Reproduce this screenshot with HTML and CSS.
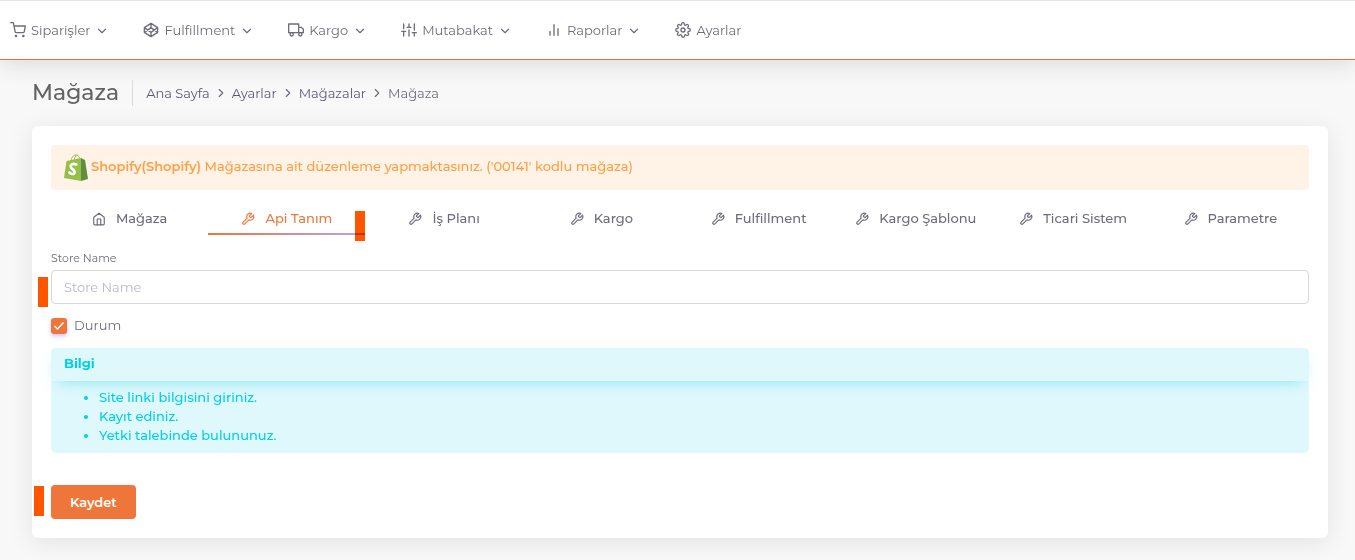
FILE: index.html
```html
<!DOCTYPE html>
<html lang="tr">
<head>
<meta charset="utf-8">
<meta name="viewport" content="width=device-width, initial-scale=1">
<title>Mağaza</title>
<link rel="stylesheet" href="styles.css">
</head>
<body>
<svg class="sprite" aria-hidden="true">
  <symbol id="chevron-down" viewBox="0 0 24 24"><path d="M6 9l6 6 6-6"/></symbol>
  <symbol id="chevron-right" viewBox="0 0 24 24"><path d="M9 18l6-6-6-6"/></symbol>
  <symbol id="tool" viewBox="0 0 24 24"><path d="M14.7 6.3a1 1 0 0 0 0 1.4l1.6 1.6a1 1 0 0 0 1.4 0l3.77-3.77a6 6 0 0 1-7.94 7.94l-6.91 6.91a2.12 2.12 0 0 1-3-3l6.91-6.91a6 6 0 0 1 7.94-7.94l-3.76 3.76z"/></symbol>
</svg>

<header class="navbar">
  <nav class="menu">
    <a class="menu-item" href="#">
      <svg class="icon" viewBox="0 0 24 24"><circle cx="9" cy="21" r="1"/><circle cx="20" cy="21" r="1"/><path d="M1 1h4l2.68 13.39a2 2 0 0 0 2 1.61h9.72a2 2 0 0 0 2-1.61L23 6H6"/></svg>
      <span>Siparişler</span>
      <svg class="caret"><use href="#chevron-down"/></svg>
    </a>
    <a class="menu-item" href="#">
      <svg class="icon" viewBox="0 0 24 24"><path d="M12 2l10 6.500v7L12 22 2 15.500v-7zM12 22v-6.500M22 8.500l-10 7-10-7M2 15.500l10-7 10 7M12 2v6.500"/></svg>
      <span>Fulfillment</span>
      <svg class="caret"><use href="#chevron-down"/></svg>
    </a>
    <a class="menu-item" href="#">
      <svg class="icon" viewBox="0 0 24 24"><path d="M1 3h15v13H1zM16 8h4l3 3v5h-7z"/><circle cx="5.500" cy="18.500" r="2.500"/><circle cx="18.500" cy="18.500" r="2.500"/></svg>
      <span>Kargo</span>
      <svg class="caret"><use href="#chevron-down"/></svg>
    </a>
    <a class="menu-item" href="#">
      <svg class="icon" viewBox="0 0 24 24"><path d="M4 21v-7M4 10V3M12 21v-9M12 8V3M20 21v-5M20 12V3M1 14h6M9 8h6M17 16h6"/></svg>
      <span>Mutabakat</span>
      <svg class="caret"><use href="#chevron-down"/></svg>
    </a>
    <a class="menu-item" href="#">
      <svg class="icon" viewBox="0 0 24 24"><path d="M18 20V10M12 20V4M6 20v-6"/></svg>
      <span>Raporlar</span>
      <svg class="caret"><use href="#chevron-down"/></svg>
    </a>
    <a class="menu-item" href="#">
      <svg class="icon" viewBox="0 0 24 24"><circle cx="12" cy="12" r="3"/><path d="M19.4 15a1.65 1.65 0 0 0 .33 1.82l.06.06a2 2 0 0 1-2.83 2.83l-.06-.06a1.65 1.65 0 0 0-2.800 1.170V21a2 2 0 0 1-4 0v-.09A1.65 1.65 0 0 0 7.200 19.650l-.06.06a2 2 0 0 1-2.830-2.830l.06-.06A1.65 1.65 0 0 0 3.090 14H3a2 2 0 0 1 0-4h.09A1.65 1.65 0 0 0 4.370 7.180l-.06-.06a2 2 0 0 1 2.830-2.830l.06.06A1.65 1.65 0 0 0 10 3.090V3a2 2 0 0 1 4 0v.09a1.65 1.65 0 0 0 2.820 1.260l.06-.06a2 2 0 0 1 2.830 2.830l-.06.06A1.65 1.65 0 0 0 20.910 10H21a2 2 0 0 1 0 4h-.09a1.65 1.65 0 0 0-1.510 1z"/></svg>
      <span>Ayarlar</span>
    </a>
  </nav>
</header>

<main class="content">
  <div class="page-head">
    <h1 class="page-title">Mağaza</h1>
    <nav class="breadcrumb" aria-label="breadcrumb">
      <a href="#">Ana Sayfa</a>
      <svg class="crumb-sep"><use href="#chevron-right"/></svg>
      <a href="#">Ayarlar</a>
      <svg class="crumb-sep"><use href="#chevron-right"/></svg>
      <a href="#">Mağazalar</a>
      <svg class="crumb-sep"><use href="#chevron-right"/></svg>
      <span>Mağaza</span>
    </nav>
  </div>

  <section class="card">
    <div class="notice">
      <svg class="shop-logo" viewBox="0 0 24 27">
        <path d="M7 8C7 4 9 1 12 1c2 0 4 2 4 6M10 8c0-4 1-6 4-7" fill="none" stroke="#95bf47" stroke-width="1"/>
        <path d="M2.500 7L17 4v23L0 24z" fill="#95bf47"/>
        <path d="M17 4l4 2 3 19-7 2z" fill="#5e8e3e"/>
        <path d="M12.300 10.500C8.500 8.800 5.800 11 7 13.500c1 2 3.800 2.300 3.600 4.600-.2 2.600-3.300 2.500-5.300.4" fill="none" stroke="#fff" stroke-width="2.600"/>
      </svg>
      <p class="notice-text"><strong>Shopify(Shopify)</strong> Mağazasına ait düzenleme yapmaktasınız. ('00141' kodlu mağaza)</p>
    </div>

    <nav class="tabs">
      <a class="tab" href="#"><svg class="tab-icon" viewBox="0 0 24 24"><path d="M3 9l9-7 9 7v11a2 2 0 0 1-2 2H5a2 2 0 0 1-2-2z"/><path d="M9 22V12h6v10"/></svg>Mağaza</a>
      <a class="tab active" href="#"><svg class="tab-icon"><use href="#tool"/></svg>Api Tanım<i class="marker marker-tab"></i></a>
      <a class="tab" href="#"><svg class="tab-icon"><use href="#tool"/></svg>İş Planı</a>
      <a class="tab" href="#"><svg class="tab-icon"><use href="#tool"/></svg>Kargo</a>
      <a class="tab" href="#"><svg class="tab-icon"><use href="#tool"/></svg>Fulfillment</a>
      <a class="tab" href="#"><svg class="tab-icon"><use href="#tool"/></svg>Kargo Şablonu</a>
      <a class="tab" href="#"><svg class="tab-icon"><use href="#tool"/></svg>Ticari Sistem</a>
      <a class="tab" href="#"><svg class="tab-icon"><use href="#tool"/></svg>Parametre</a>
    </nav>

    <form class="form">
      <label class="field-label" for="store-name">Store Name</label>
      <div class="field">
        <input class="text-input" id="store-name" type="text" placeholder="Store Name">
        <i class="marker marker-field"></i>
      </div>
      <div class="check">
        <input class="checkbox" id="status" type="checkbox" checked>
        <label class="check-label" for="status">Durum</label>
      </div>
      <div class="info">
        <h2 class="info-title">Bilgi</h2>
        <ul class="info-list">
          <li>Site linki bilgisini giriniz.</li>
          <li>Kayıt ediniz.</li>
          <li>Yetki talebinde bulununuz.</li>
        </ul>
      </div>
      <div class="actions">
        <button class="save" type="button">Kaydet</button>
        <i class="marker marker-save"></i>
      </div>
    </form>
  </section>
</main>
</body>
</html>
```
FILE: styles.css
```css
* { box-sizing: border-box; }

body {
  margin: 0;
  background: #f8f8f8;
  color: #6e6b7b;
  font-family: Montserrat, Inter, sans-serif;
  font-size: 13px;
  line-height: 20px;
}

a { color: inherit; text-decoration: none; }
h1, h2, p, ul { margin: 0; }

svg {
  flex: none;
  fill: none;
  stroke: currentColor;
  stroke-width: 2;
  stroke-linecap: round;
  stroke-linejoin: round;
}

.sprite { display: none; }

.navbar {
  height: 60px;
  background: #fff;
  border-top: 1px solid #e4e4e4;
  border-bottom: 1px solid #dd6f42;
  box-shadow: 0 4px 24px rgba(34, 41, 47, 0.14);
}

.menu {
  display: flex;
  align-items: center;
  gap: 34px;
  height: 100%;
  padding: 0 10px;
}

.menu-item {
  display: flex;
  align-items: center;
  gap: 5px;
}

.icon { width: 16px; height: 16px; }
.caret { width: 14px; height: 14px; margin-top: 2px; }

.content { padding: 20px 27px 22px 32px; }

.page-head {
  display: flex;
  align-items: center;
  height: 26px;
  margin-bottom: 20px;
}

.page-title {
  padding-right: 13px;
  border-right: 1px solid #d6dce1;
  color: #636363;
  font-size: 22px;
  font-weight: 500;
  line-height: 26px;
}

.breadcrumb {
  display: flex;
  align-items: center;
  gap: 4px;
  padding-left: 13px;
}

.breadcrumb a { color: #5e5873; }
.crumb-sep { width: 14px; height: 14px; }

.card {
  padding: 19px;
  background: #fff;
  border-radius: 6px;
  box-shadow: 0 4px 24px rgba(34, 41, 47, 0.1);
}

.notice {
  display: flex;
  align-items: center;
  gap: 3px;
  min-height: 45px;
  padding: 0 13px;
  border-radius: 4px;
  background: #fff2e6;
  color: #ff9f43;
  font-weight: 500;
}

.notice-text { padding-bottom: 3px; }
.notice strong { font-weight: 600; }
.shop-logo { width: 24px; height: 27px; stroke: none; }

.tabs { display: flex; margin-bottom: 15px; }

.tab {
  position: relative;
  display: flex;
  flex: 1 1 0;
  align-items: center;
  justify-content: center;
  gap: 10px;
  height: 45px;
  padding-top: 11px;
  font-weight: 500;
  white-space: nowrap;
}

.tab-icon { width: 14px; height: 14px; margin-top: 2px; }
.tab.active { color: #ee763b; }

.tab.active::after {
  content: "";
  position: absolute;
  right: 1px;
  bottom: 0;
  left: 0;
  height: 2px;
  background: linear-gradient(90deg, #ee763b, #b8a6e6);
}

.marker {
  position: absolute;
  width: 10px;
  height: 30px;
  background: #ff5500;
  mix-blend-mode: multiply;
}

.marker-tab { z-index: 1; right: 1px; bottom: -6px; }
.marker-field { left: -13px; top: 7px; }
.marker-save { left: -17px; top: 1px; }

.field-label { display: block; font-size: 11px; line-height: 16px; }
.field, .actions { position: relative; }
.field { margin-top: 4px; }

.text-input {
  display: block;
  width: 100%;
  height: 34px;
  padding: 0 12px;
  border: 1px solid #d8d6de;
  border-radius: 4px;
  background: #fff;
  color: #6e6b7b;
  font: inherit;
}

.text-input::placeholder { color: #b9b9c3; opacity: 1; }

.check {
  display: flex;
  align-items: center;
  gap: 7px;
  height: 20px;
  margin: 12px 0;
}

.check-label { padding-bottom: 2px; }

.checkbox {
  width: 16px;
  height: 16px;
  margin: 0;
  appearance: none;
  border-radius: 3px;
  background: #ee763b url("data:image/svg+xml,%3Csvg xmlns='http://www.w3.org/2000/svg' viewBox='0 0 16 16'%3E%3Cpath d='M3.500 8l3 3 6-6.500' fill='none' stroke='white' stroke-width='1.500'/%3E%3C/svg%3E") center / 16px no-repeat;
  box-shadow: 0 2px 4px rgba(115, 103, 240, 0.4);
}

.info {
  border-radius: 5px;
  background: #dff8fc;
  color: #00cfe8;
  font-weight: 500;
}

.info-title {
  height: 33px;
  padding: 0 13px;
  border-radius: 5px 5px 0 0;
  font-size: 13px;
  font-weight: 700;
  line-height: 31px;
  box-shadow: 0 6px 15px -7px rgba(0, 207, 232, 0.5);
  background: #dff8fc;
}

.info-list {
  padding: 7px 13px 8px 48px;
  line-height: 19px;
}

.actions { margin-top: 32px; }

.save {
  display: block;
  height: 34px;
  padding: 0 19px 1px;
  border: 0;
  border-radius: 4px;
  background: #ee763b;
  color: #fff;
  font: inherit;
  font-weight: 600;
}
```
